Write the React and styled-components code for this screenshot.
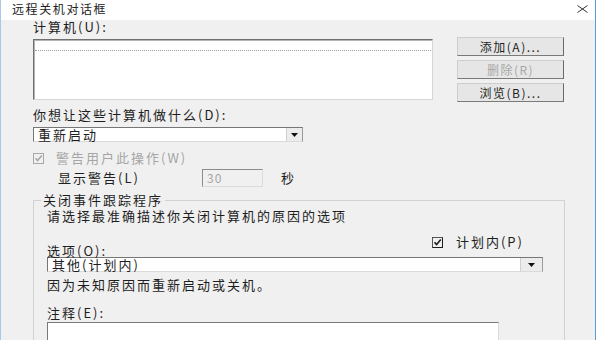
import styled, { createGlobalStyle } from 'styled-components';

const GlobalStyle = createGlobalStyle`
  html, body {
    margin: 0;
    padding: 0;
    background: #ffffff;
  }
  body {
    width: 600px;
    height: 340px;
    overflow: hidden;
    font-family: "Noto Sans CJK SC", "Noto Sans", sans-serif;
  }
  * {
    box-sizing: border-box;
  }
`;

function CheckIcon({ disabled }) {
  const color = disabled ? '#a8a8a8' : '#1e1e1e';
  return (
    <svg width="11" height="11" viewBox="0 0 11 11">
      <rect x="0.5" y="0.5" width="10" height="10" fill="none" stroke={color} />
      {!disabled && <path d="M0.5 10.5V0.5H10.5" fill="none" stroke="#555" />}
      <path d="M2.5 5.2L4.6 7.6L8.8 2.6" fill="none" stroke={color} strokeWidth="1.6" />
    </svg>
  );
}

function ArrowDown() {
  return (
    <svg width="7" height="4" viewBox="0 0 7 4">
      <path d="M0 0H7L3.5 4Z" fill="#111" />
    </svg>
  );
}

function Combo({ value, width, arrowWidth }) {
  return (
    <ComboBox $width={width}>
      <ComboValue>{value}</ComboValue>
      <ComboButton $width={arrowWidth}>
        <ArrowDown />
      </ComboButton>
    </ComboBox>
  );
}

export default function App() {
  return (
    <>
      <GlobalStyle />
      <Window>
        <TitleBar>
          <Title>远程关机对话框</Title>
          <svg width="11" height="8" viewBox="0 0 11 8">
            <path d="M0.5 0.5L10.5 7.5M10.5 0.5L0.5 7.5" stroke="#333" strokeWidth="1" />
          </svg>
        </TitleBar>

        <Body>
          <TopSection>
            <ListColumn>
              <Label>计算机(U):</Label>
              <ListBox>
                <FocusRow />
              </ListBox>
            </ListColumn>
            <ButtonColumn>
              <Button>添加(A)...</Button>
              <Button $disabled>删除(R)</Button>
              <Button>浏览(B)...</Button>
            </ButtonColumn>
          </TopSection>

          <Label $top={6}>你想让这些计算机做什么(D):</Label>
          <ComboSlot $top={5}>
            <Combo value="重新启动" width={270} arrowWidth={16} />
          </ComboSlot>

          <CheckRow $top={9} $gap={12}>
            <CheckIcon disabled />
            <Text $disabled>警告用户此操作(W)</Text>
          </CheckRow>

          <WarnRow>
            <WarnLabel>显示警告(L)</WarnLabel>
            <NumberBox>30</NumberBox>
            <Text>秒</Text>
          </WarnRow>

          <Group>
            <Legend>关闭事件跟踪程序</Legend>
            <Label>请选择最准确描述你关闭计算机的原因的选项</Label>
            <OptionsRow>
              <OptionLabel>选项(O):</OptionLabel>
              <CheckRow $gap={13} $right={19}>
                <CheckIcon />
                <Text>计划内(P)</Text>
              </CheckRow>
            </OptionsRow>
            <Combo value="其他(计划内)" width={496} arrowWidth={22} />
            <Label $top={6}>因为未知原因而重新启动或关机。</Label>
            <Label $top={14}>注释(E):</Label>
            <CommentBox />
          </Group>
        </Body>
      </Window>
    </>
  );
}

const Window = styled.div`
  width: 596px;
  height: 340px;
  display: flex;
  flex-direction: column;
  background: #f0f0f0;
  border-left: 1px solid #a9c9ea;
  border-right: 1px solid #5c9ad6;
  overflow: hidden;
`;

const TitleBar = styled.div`
  flex: none;
  height: 20px;
  display: flex;
  align-items: center;
  justify-content: space-between;
  padding: 0 7px 2px 11px;
  background: #ffffff;
`;

const Title = styled.span`
  font-size: 12px;
  line-height: 14px;
  letter-spacing: 1.6px;
  color: #222;
`;

const Body = styled.div`
  display: flex;
  flex-direction: column;
  align-items: flex-start;
  padding-left: 32px;
`;

const Text = styled.span`
  font-size: 13px;
  line-height: 14px;
  letter-spacing: 2px;
  white-space: nowrap;
  color: ${(p) => (p.$disabled ? '#a6a6a6' : '#1e1e1e')};
`;

const Label = styled.div`
  height: 14px;
  margin-top: ${(p) => p.$top || 0}px;
  font-size: 13px;
  line-height: 14px;
  letter-spacing: 2px;
  white-space: nowrap;
  color: #1e1e1e;
`;

const TopSection = styled.div`
  display: flex;
  align-items: flex-start;
  gap: 24px;
`;

const ListColumn = styled.div`
  width: 400px;
  display: flex;
  flex-direction: column;
  gap: 5px;
`;

const ListBox = styled.div`
  height: 61px;
  padding: 1px;
  background: #ffffff;
  border: 1px solid;
  border-color: #6f6f6f #d6d6d6 #d6d6d6 #6f6f6f;
  box-shadow: inset 1px 1px 0 #b4b4b4;
`;

const FocusRow = styled.div`
  height: 10px;
  border-bottom: 1px dotted #a0a0a0;
`;

const ButtonColumn = styled.div`
  display: flex;
  flex-direction: column;
  gap: 4px;
  padding-top: 17px;
`;

const Button = styled.div`
  width: 107px;
  height: 19px;
  display: flex;
  align-items: center;
  justify-content: center;
  background: #e6e6e6;
  border: 1px solid;
  border-color: #cdcdcd #6a6a6a #7a7a7a #cdcdcd;
  font-size: 12px;
  line-height: 14px;
  letter-spacing: 1.5px;
  color: ${(p) => (p.$disabled ? '#a6a6a6' : '#1e1e1e')};
`;

const ComboSlot = styled.div`
  margin-top: ${(p) => p.$top || 0}px;
`;

const ComboBox = styled.div`
  width: ${(p) => p.$width}px;
  height: 15px;
  display: flex;
  align-items: stretch;
  background: #ffffff;
  border: 1px solid;
  border-color: #767676 #9a9a9a #dadada #767676;
`;

const ComboValue = styled.div`
  flex: 1;
  padding-left: 4px;
  font-size: 13px;
  line-height: 13px;
  letter-spacing: 2px;
  color: #1e1e1e;
  white-space: nowrap;
`;

const ComboButton = styled.div`
  width: ${(p) => p.$width}px;
  display: flex;
  align-items: center;
  justify-content: center;
  background: #ececec;
  border-left: 1px solid #d0d0d0;
`;

const CheckRow = styled.div`
  height: 14px;
  display: flex;
  align-items: center;
  gap: ${(p) => p.$gap}px;
  margin-top: ${(p) => p.$top || 0}px;
  margin-right: ${(p) => p.$right || 0}px;
`;

const WarnRow = styled.div`
  display: flex;
  align-items: center;
  margin-top: 4px;
  padding-left: 25px;
`;

const WarnLabel = styled(Text)`
  width: 144px;
`;

const NumberBox = styled.div`
  width: 61px;
  height: 18px;
  margin-right: 18px;
  padding-left: 4px;
  border: 1px solid;
  border-color: #8c8c8c #dcdcdc #dcdcdc #8c8c8c;
  font-size: 12px;
  line-height: 16px;
  letter-spacing: 1px;
  color: #a6a6a6;
`;

const Group = styled.div`
  position: relative;
  width: 532px;
  height: 200px;
  margin-top: 13px;
  padding: 8px 0 0 13px;
  border: 1px solid #d2d2d2;
`;

const Legend = styled.div`
  position: absolute;
  top: -8px;
  left: 7px;
  padding: 0 2px;
  background: #f0f0f0;
  font-size: 13px;
  line-height: 14px;
  letter-spacing: 2px;
  color: #1e1e1e;
  white-space: nowrap;
`;

const OptionsRow = styled.div`
  width: 496px;
  display: flex;
  align-items: flex-start;
  justify-content: space-between;
  margin-top: 12px;
`;

const OptionLabel = styled(Text)`
  margin-top: 10px;
  line-height: 12px;
`;

const CommentBox = styled.div`
  width: 452px;
  height: 60px;
  margin-top: 2px;
  background: #ffffff;
  border: 1px solid;
  border-color: #7a7a7a #dadada #dadada #7a7a7a;
`;
